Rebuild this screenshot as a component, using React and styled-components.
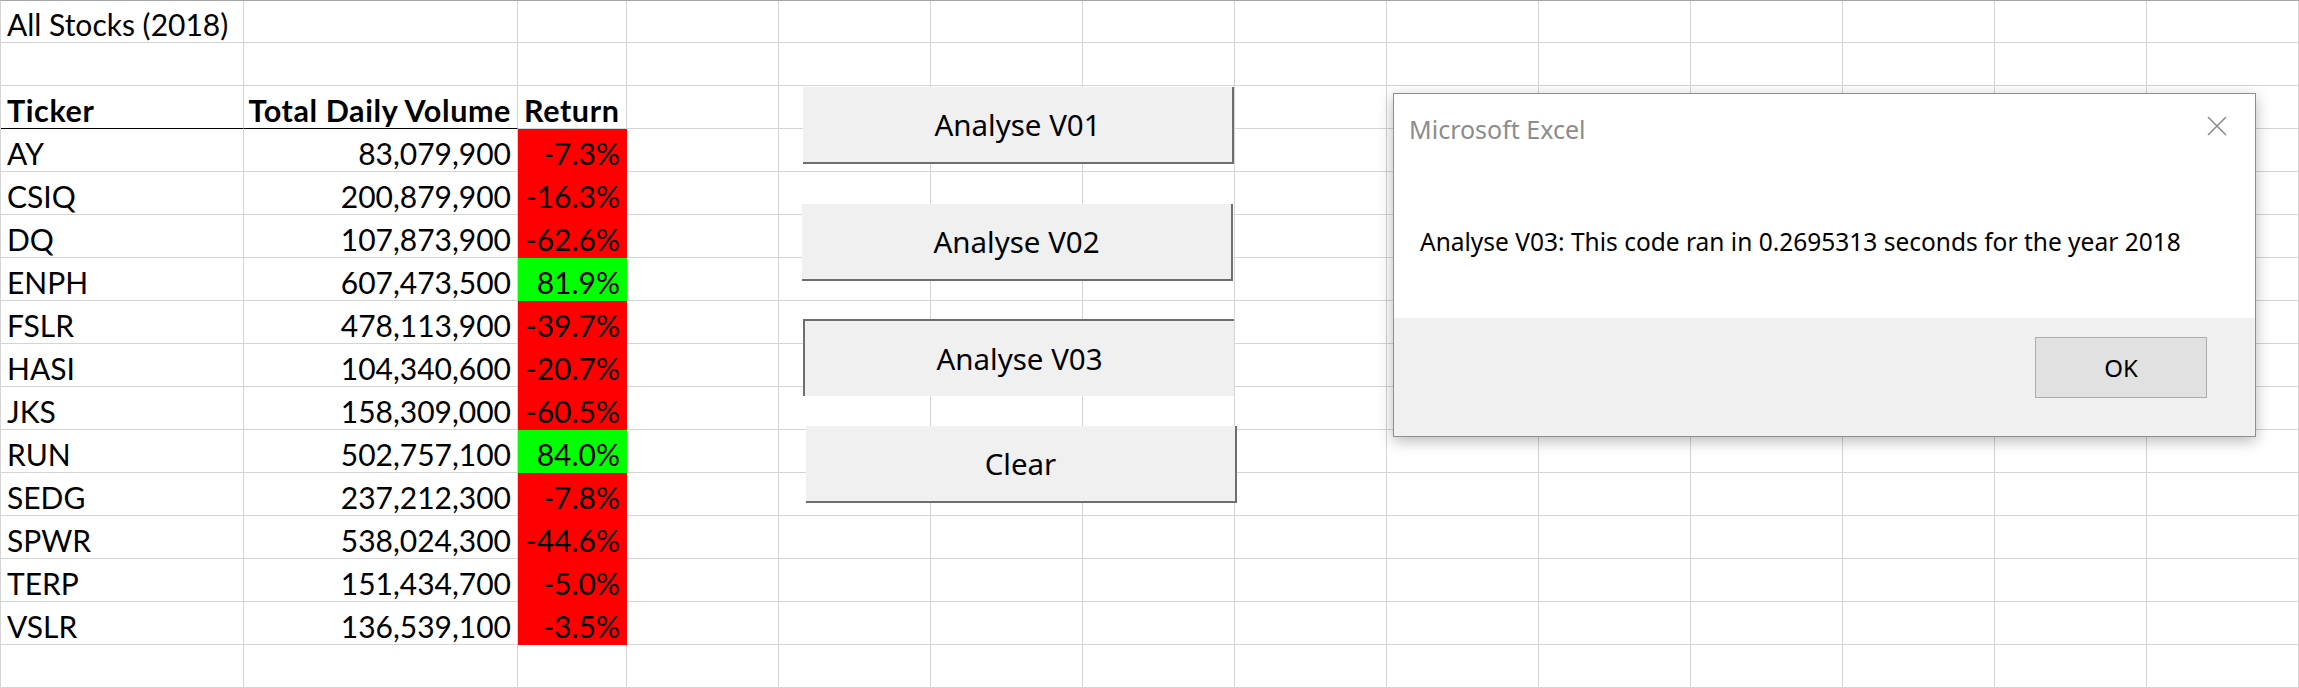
import React from "react";
import styled, { createGlobalStyle } from "styled-components";

const GlobalStyle = createGlobalStyle`
  html, body {
    margin: 0;
    padding: 0;
    background: #ffffff;
  }
  body {
    font-family: "Lato", "Liberation Sans", sans-serif;
    overflow: hidden;
  }
`;

const COLUMNS = [243, 274, 109, 152, 152, 152, 152, 152, 152, 152, 152, 152, 152, 152];
const ROW_COUNT = 16;

const stocks = [
  { ticker: "AY", volume: "83,079,900", ret: "-7.3%" },
  { ticker: "CSIQ", volume: "200,879,900", ret: "-16.3%" },
  { ticker: "DQ", volume: "107,873,900", ret: "-62.6%" },
  { ticker: "ENPH", volume: "607,473,500", ret: "81.9%" },
  { ticker: "FSLR", volume: "478,113,900", ret: "-39.7%" },
  { ticker: "HASI", volume: "104,340,600", ret: "-20.7%" },
  { ticker: "JKS", volume: "158,309,000", ret: "-60.5%" },
  { ticker: "RUN", volume: "502,757,100", ret: "84.0%" },
  { ticker: "SEDG", volume: "237,212,300", ret: "-7.8%" },
  { ticker: "SPWR", volume: "538,024,300", ret: "-44.6%" },
  { ticker: "TERP", volume: "151,434,700", ret: "-5.0%" },
  { ticker: "VSLR", volume: "136,539,100", ret: "-3.5%" },
];

const buttons = [
  { label: "Analyse V01", left: 802, top: 86 },
  { label: "Analyse V02", left: 801, top: 203 },
  { label: "Analyse V03", left: 802, top: 318, pressed: true },
  { label: "Clear", left: 805, top: 425 },
];

// builds the 16 x 14 grid of cells, row by row
const buildRows = () => {
  const rows = [];
  for (let r = 0; r < ROW_COUNT; r++) {
    const cells = COLUMNS.map(() => ({ text: "" }));
    if (r === 0) cells[0] = { text: "All Stocks (2018)" };
    if (r === 2) {
      cells[0] = { text: "Ticker", bold: true, underline: true };
      cells[1] = { text: "Total Daily Volume", bold: true, underline: true, align: "right" };
      cells[2] = { text: "Return", bold: true };
    }
    const stock = stocks[r - 3];
    if (stock) {
      cells[0] = { text: stock.ticker };
      cells[1] = { text: stock.volume, align: "right" };
      cells[2] = {
        text: stock.ret,
        align: "right",
        fill: stock.ret.startsWith("-") ? "#ff0000" : "#00ff00",
      };
    }
    rows.push(cells);
  }
  return rows;
};

const App = () => {
  const rows = buildRows();

  return (
    <>
      <GlobalStyle />
      <Sheet>
        <Grid>
          {rows.map((cells, r) =>
            cells.map((cell, c) => (
              <Cell
                key={`${r}-${c}`}
                $align={cell.align}
                $bold={cell.bold}
                $fill={cell.fill}
                $underline={cell.underline}
              >
                {cell.text}
              </Cell>
            ))
          )}
        </Grid>

        {buttons.map((btn) => (
          <SheetButton
            key={btn.label}
            $pressed={btn.pressed}
            style={{ left: btn.left, top: btn.top }}
          >
            {btn.label}
          </SheetButton>
        ))}

        <Dialog>
          <TitleBar>
            <Title>Microsoft Excel</Title>
            <CloseIcon viewBox="0 0 20 20">
              <path d="M1 1 L19 19 M19 1 L1 19" />
            </CloseIcon>
          </TitleBar>
          <Body>
            <Message>
              Analyse V03: This code ran in 0.2695313 seconds for the year 2018
            </Message>
          </Body>
          <Footer>
            <OkButton>OK</OkButton>
          </Footer>
        </Dialog>
      </Sheet>
    </>
  );
};

const Sheet = styled.div`
  position: relative;
  width: 2299px;
  height: 688px;
  overflow: hidden;
  border-top: 1px solid #a6a6a6;
  box-sizing: border-box;
  border-left: 1px solid #d4d4d4;
`;

const Grid = styled.div`
  display: grid;
  grid-template-columns: ${COLUMNS.map((w) => `${w}px`).join(" ")};
  grid-auto-rows: 43px;
  margin-top: -1px;
`;

const Cell = styled.div`
  box-sizing: border-box;
  display: flex;
  align-items: flex-end;
  justify-content: ${(p) => (p.$align === "right" ? "flex-end" : "flex-start")};
  padding: 0 6px 3px 6px;
  border-right: 1px solid ${(p) => p.$fill || "#d4d4d4"};
  border-bottom: 1px solid
    ${(p) => (p.$underline ? "#000000" : p.$fill || "#d4d4d4")};
  background: ${(p) => p.$fill || "transparent"};
  font-family: "Lato", "Liberation Sans", sans-serif;
  font-size: ${(p) => (p.$bold ? "30.5px" : "30px")};
  font-weight: ${(p) => (p.$bold ? 700 : 400)};
  letter-spacing: ${(p) => (p.$bold ? "0.6px" : "0")};
  color: #000000;
  white-space: nowrap;
  line-height: 1;
`;

const SheetButton = styled.div`
  position: absolute;
  box-sizing: border-box;
  width: 431px;
  height: 77px;
  display: flex;
  align-items: center;
  justify-content: center;
  background: #f0f0f0;
  border-style: solid;
  border-color: #6e6e6e;
  border-width: ${(p) => (p.$pressed ? "2px 0 0 2px" : "0 2px 2px 0")};
  font-family: "Noto Sans", "Open Sans", sans-serif;
  font-size: 29.5px;
  color: #000000;
`;

const Dialog = styled.div`
  position: absolute;
  left: 1392px;
  top: 92px;
  width: 863px;
  height: 344px;
  box-sizing: border-box;
  display: flex;
  flex-direction: column;
  background: #ffffff;
  border: 1px solid #8e8e8e;
  box-shadow: 0 4px 14px rgba(0, 0, 0, 0.28);
  font-family: "Noto Sans", "Open Sans", sans-serif;
`;

const TitleBar = styled.div`
  height: 70px;
  display: flex;
  align-items: center;
  justify-content: space-between;
  padding: 0 28px 0 15px;
`;

const Title = styled.div`
  font-size: 25px;
  color: #8c8c8c;
  font-weight: 400;
`;

const CloseIcon = styled.svg`
  width: 20px;
  height: 20px;
  stroke: #8c8c8c;
  stroke-width: 1.6;
  fill: none;
  margin-top: -6px;
`;

const Body = styled.div`
  flex: 1;
  display: flex;
  align-items: center;
  padding: 0 26px;
`;

const Message = styled.div`
  font-size: 24.5px;
  color: #000000;
`;

const Footer = styled.div`
  height: 118px;
  box-sizing: border-box;
  display: flex;
  justify-content: flex-end;
  align-items: flex-start;
  padding: 19px 48px 0 0;
  background: #f0f0f0;
`;

const OkButton = styled.div`
  box-sizing: border-box;
  width: 172px;
  height: 61px;
  display: flex;
  align-items: center;
  justify-content: center;
  background: #e1e1e1;
  border: 1px solid #adadad;
  font-size: 24px;
  color: #000000;
`;

export default App;
